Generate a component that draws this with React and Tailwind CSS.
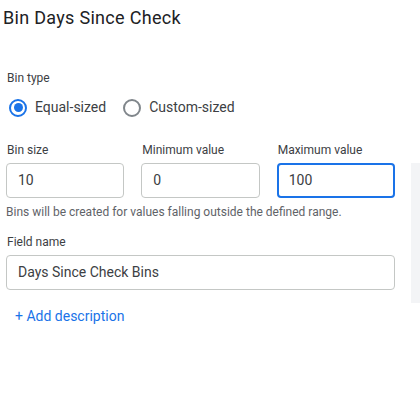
import React from 'react';

const Radio = ({ checked, label }) => (
  <label className="flex items-center gap-[8px]">
    {checked ? (
      <span className="w-[18px] h-[18px] rounded-full border-2 border-[#1a73e8] flex items-center justify-center">
        <span className="w-[9px] h-[9px] rounded-full bg-[#1a73e8]" />
      </span>
    ) : (
      <span className="w-[18px] h-[18px] rounded-full border-2 border-[#80868b]" />
    )}
    <span className="text-[14px] text-[#3c4043]">{label}</span>
  </label>
);

const Field = ({ label, value, focused }) => (
  <div className="flex flex-col">
    <div className="text-[12px] leading-[16px] text-[#3c4043] pl-px mb-[5px]">{label}</div>
    <div
      className={
        focused
          ? 'h-[35px] rounded-[4px] border-2 border-[#1a73e8] flex items-center pl-[10px] text-[14px] text-[#3c4043]'
          : 'h-[35px] rounded-[4px] border border-[#c4c7c5] flex items-center pl-[11px] text-[14px] text-[#3c4043]'
      }
    >
      {value}
    </div>
  </div>
);

export default function App() {
  return (
    <div className="w-[420px] h-[401px] overflow-hidden bg-white font-['Roboto',sans-serif]">
      <h1 className="pl-[3px] pt-[6px] text-[18px] leading-[24px] tracking-[0.3px] text-[#202124]">Bin Days Since Check</h1>

      <div className="flex">
        <div className="w-[411px] pl-[6px]">
          {/* Bin type */}
          <div className="mt-[40px] text-[12px] leading-[16px] text-[#3c4043] pl-px">Bin type</div>
          <div className="flex items-center gap-[17px] mt-[11px] pl-[3px]">
            <Radio checked label="Equal-sized" />
            <Radio label="Custom-sized" />
          </div>

          {/* Bin settings */}
          <div className="grid grid-cols-3 gap-[17px] w-[389px] mt-[24px]">
            <Field label="Bin size" value="10" />
            <Field label="Minimum value" value="0" />
            <Field label="Maximum value" value="100" focused />
          </div>
          <p className="mt-[6px] text-[12px] leading-[16px] text-[#5f6368]">
            Bins will be created for values falling outside the defined range.
          </p>

          {/* Field name */}
          <div className="w-[389px] mt-[14px]">
            <Field label="Field name" value="Days Since Check Bins" />
          </div>

          <button className="mt-[16px] ml-[9px] text-[14px] text-[#1a73e8]">+ Add description</button>
        </div>

        <div className="w-[9px] h-[140px] mt-[133px] bg-[#f3f4f6]" />
      </div>
    </div>
  );
}
